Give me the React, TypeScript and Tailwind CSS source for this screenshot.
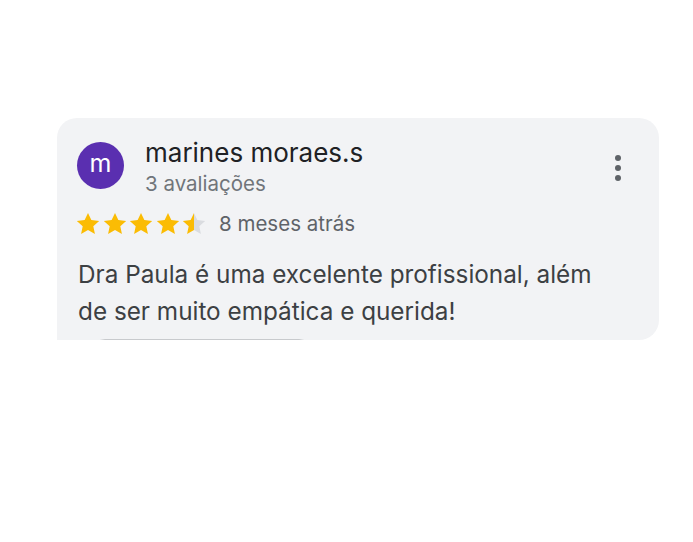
import React from 'react'

const Star: React.FC<{ fill?: 'full' | 'half' }> = ({ fill = 'full' }) => (
  <svg width="26" height="26" viewBox="0 0 24 24" className="shrink-0">
    <defs>
      <linearGradient id="half-star">
        <stop offset="50%" stopColor="#fbbc04" />
        <stop offset="50%" stopColor="#dadce0" />
      </linearGradient>
    </defs>
    <path
      d="M12 1.8l3.1 6.6 7.2.8-5.4 4.9 1.5 7.1L12 17.6l-6.4 3.6 1.5-7.1L1.7 9.2l7.2-.8z"
      fill={fill === 'half' ? 'url(#half-star)' : '#fbbc04'}
    />
  </svg>
)

export default function App() {
  return (
    <div
      className="w-[693px] h-[542px] bg-white overflow-hidden pt-[118px] pl-[57px]"
      style={{ fontFamily: 'Inter, "Liberation Sans", sans-serif' }}
    >
      <div className="w-[602px] h-[222px] bg-[#f2f3f5] rounded-tl-[20px] rounded-tr-[20px] rounded-br-[20px] relative overflow-hidden">
        <div className="flex items-start pl-[20px] pr-[38px] pt-[20px]">
          <div className="w-[47px] h-[47px] rounded-full bg-[#5a2fb0] flex items-center justify-center text-white text-[25px] leading-none pb-[4px] mt-[4px]">
            m
          </div>
          <div className="ml-[21px] flex-1">
            <div className="text-[26px] leading-[30px] text-[#202124]">marines moraes.s</div>
            <div className="text-[20.5px] leading-[24px] text-[#70757a] mt-[4px]">3 avaliações</div>
          </div>
          <div className="flex flex-col gap-[4px] mt-[17px]">
            <span className="w-[6px] h-[6px] rounded-full bg-[#5f6368]" />
            <span className="w-[6px] h-[6px] rounded-full bg-[#5f6368]" />
            <span className="w-[6px] h-[6px] rounded-full bg-[#5f6368]" />
          </div>
        </div>
        <div className="flex items-center h-[26px] pl-[18px] mt-[15px]">
          <div className="flex gap-[0.5px]">
            <Star />
            <Star />
            <Star />
            <Star />
            <Star fill="half" />
          </div>
          <span className="ml-[12px] text-[20.5px] leading-[24px] text-[#5f6368]">8 meses atrás</span>
        </div>
        <p className="pl-[21px] pr-[10px] mt-[19px] text-[24.3px] leading-[37px] text-[#3c4043]">
          Dra Paula é uma excelente profissional, além
          <br />
          de ser muito empática e querida!
        </p>
        <div className="absolute left-[34px] top-[221px] w-[222px] h-[40px] rounded-[14px] border border-[#c8cacd] bg-[#f2f3f5]" />
      </div>
    </div>
  )
}
